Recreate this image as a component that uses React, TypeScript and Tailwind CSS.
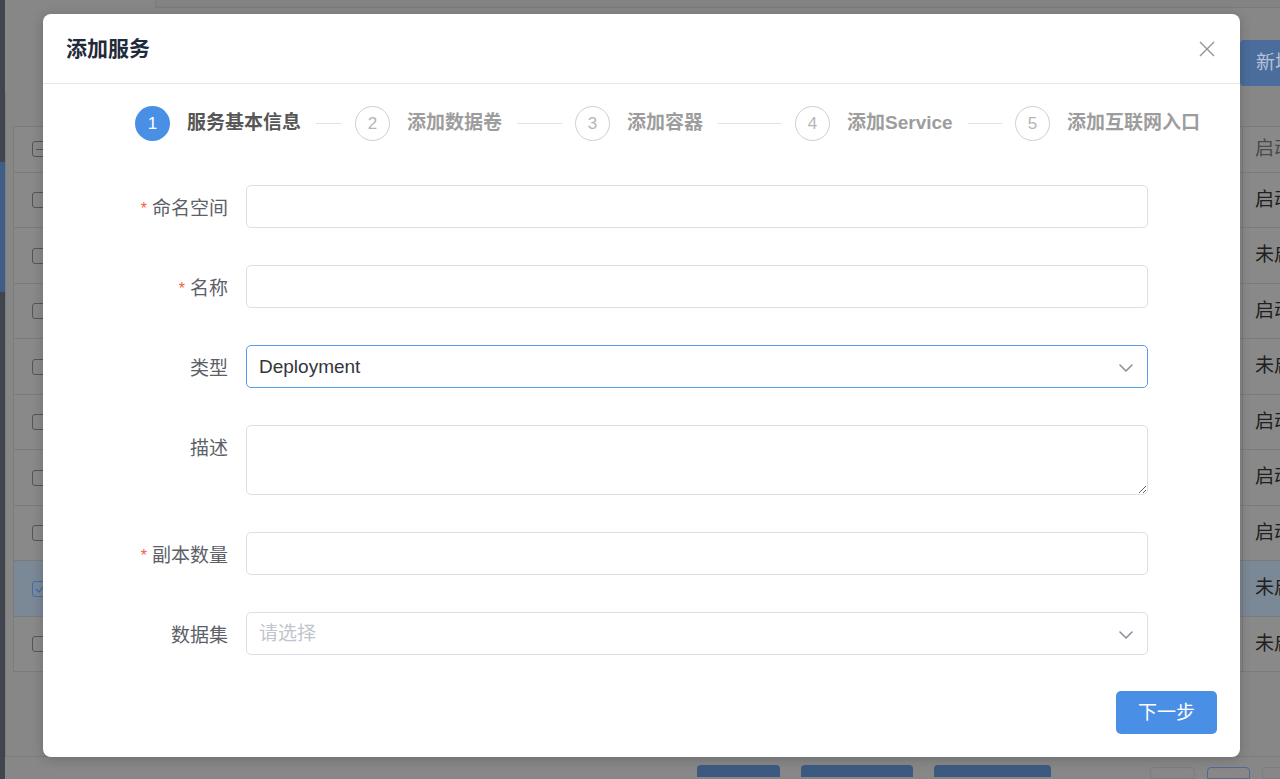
import type { ReactNode } from 'react';

const font = "font-['Liberation_Sans','Noto_Sans_CJK_SC',sans-serif]";

const steps = ['服务基本信息', '添加数据卷', '添加容器', '添加Service', '添加互联网入口'];

const rows = ['启动', '未启动', '启动', '未启动', '启动', '启动', '启动', '未启动', '未启动'];

function Chevron() {
  return (
    <svg width="14" height="8" viewBox="0 0 14 8" fill="none" className="shrink-0">
      <path d="M1 1l6 6 6-6" stroke="#8d9199" strokeWidth="1.6" strokeLinecap="round" strokeLinejoin="round" />
    </svg>
  );
}

function Field({ label, required, children, top }: { label: string; required?: boolean; children: ReactNode; top?: boolean }) {
  return (
    <div className={top ? 'flex items-start' : 'flex items-center'}>
      <label className="flex h-[43px] w-[203px] shrink-0 items-center justify-end pt-[5px] pr-[18px] text-[19px] text-[#5c6068]">
        {required ? <span className="mr-[5px] text-[16px] leading-none text-[#f0603c]">*</span> : null}
        {label}
      </label>
      {children}
    </div>
  );
}

function Box({ children, className = '' }: { children?: ReactNode; className?: string }) {
  return (
    <div className={`flex h-[43px] w-[902px] items-center rounded-[5px] border px-[12px] pt-[2px] text-[19px] ${className}`}>
      {children}
    </div>
  );
}

function Checkbox({ checked, half }: { checked?: boolean; half?: boolean }) {
  return (
    <span
      className={`flex h-[16px] w-[16px] items-center justify-center rounded-[3px] border ${
        checked ? 'border-[#3f6ea8]' : 'border-[#555]'
      }`}
    >
      {half ? <span className="h-px w-[8px] bg-[#555]" /> : null}
      {checked ? (
        <svg width="10" height="8" viewBox="0 0 10 8" fill="none">
          <path d="M1 4l3 3 5-6" stroke="#3f6ea8" strokeWidth="1.4" />
        </svg>
      ) : null}
    </span>
  );
}

export default function App() {
  return (
    <div className={`relative flex h-[779px] w-[1280px] overflow-hidden bg-[#878787] ${font}`}>
      {/* dimmed page behind the dialog */}
      <div className="flex h-full w-[5px] shrink-0 flex-col bg-[#41464e]">
        <div className="h-[162px]" />
        <div className="h-[130px] bg-[#3f5e87]" />
      </div>
      <div className="flex min-w-0 flex-1 flex-col">
        <div className="ml-[150px] h-[8px] border-b border-l border-[#7b7b7b] bg-[#838383]" />
        <div className="mt-[32px] flex h-[47px] justify-end">
          <div className="flex w-[40px] items-center rounded-l-[4px] bg-[#4a6d9c] pl-[16px] text-[19px] whitespace-nowrap text-[#b4c3d6]">
            新增
          </div>
        </div>
        <div className="mt-[8px] flex h-[674px] flex-col border-b border-l border-[#7b7b7b] pt-[32px] pl-[7px]">
          <div className="border-t border-l border-[#7b7b7b] bg-[#898989]">
            <div className="flex h-[45.7px] items-center border-b border-[#7b7b7b]">
              <div className="flex w-[1228px] shrink-0 pl-[18px]">
                <Checkbox half />
              </div>
              <div className="flex h-full flex-1 items-center border-l border-[#7b7b7b] pl-[12px] text-[19px] whitespace-nowrap text-[#4a4a4a]">
                启动状态
              </div>
            </div>
            {rows.map((r, i) => (
              <div
                key={i}
                className={`flex h-[55.5px] items-center border-b border-[#7b7b7b] ${i === 7 ? 'bg-[#7b8896]' : ''}`}
              >
                <div className="flex w-[1228px] shrink-0 pl-[18px]">
                  <Checkbox checked={i === 7} />
                </div>
                <div className="flex h-full flex-1 items-center border-l border-[#7b7b7b] pl-[12px] text-[19px] whitespace-nowrap text-[#202020]">
                  {r}
                </div>
              </div>
            ))}
          </div>
        </div>
        <div className="mt-[8px] flex items-start">
          <div className="ml-[692px] h-[12px] w-[83px] shrink-0 rounded-t-[4px] bg-[#3c5a80]" />
          <div className="ml-[21px] h-[12px] w-[112px] shrink-0 rounded-t-[4px] bg-[#3c5a80]" />
          <div className="ml-[21px] h-[12px] w-[117px] shrink-0 rounded-t-[4px] bg-[#3c5a80]" />
          <div className="mt-[2px] ml-[99px] h-[12px] w-[45px] shrink-0 rounded-t-[4px] border border-[#7d7d7d]" />
          <div className="mt-[2px] ml-[12px] h-[12px] w-[43px] shrink-0 rounded-t-[4px] border border-[#4d6c94]" />
          <div className="mt-[2px] ml-[12px] h-[12px] w-[30px] shrink-0 rounded-t-[4px] border border-[#7d7d7d]" />
        </div>
      </div>

      {/* dialog */}
      <div className="absolute top-[14px] left-[43px] flex h-[743px] w-[1197px] flex-col rounded-[8px] bg-white shadow-[0_2px_12px_rgba(0,0,0,0.2)]">
        <div className="flex h-[70px] shrink-0 items-center justify-between border-b border-[#e6e8eb] pr-[25px] pl-[23px]">
          <h2 className="text-[21px] leading-none font-semibold text-[#1f2a3a]">添加服务</h2>
          <svg width="16" height="16" viewBox="0 0 16 16" fill="none">
            <path d="M1 1l14 14M15 1L1 15" stroke="#909399" strokeWidth="1.4" />
          </svg>
        </div>

        <div className="mt-[22px] flex items-center pl-[92px]">
          {steps.map((s, i) => (
            <div key={s} className={i < 4 ? 'flex w-[220px] items-center' : 'flex items-center'}>
              <div
                className={`flex h-[35px] w-[35px] shrink-0 items-center justify-center rounded-full text-[17px] ${
                  i === 0 ? 'bg-[#4a8fe6] text-white' : 'border border-[#cfcfcf] text-[#b5b5b5]'
                }`}
              >
                {i + 1}
              </div>
              <span
                className={`ml-[17px] shrink-0 text-[19px] font-semibold whitespace-nowrap ${
                  i === 0 ? 'text-[#565656]' : 'text-[#9d9d9d]'
                }`}
              >
                {s}
              </span>
              {i < 4 ? <div className="mr-[13px] ml-[15px] h-px flex-1 bg-[#e2e2e2]" /> : null}
            </div>
          ))}
        </div>

        <div className="mt-[44px] flex flex-col gap-[37px]">
          <Field label="命名空间" required>
            <Box className="border-[#dcdfe6]" />
          </Field>
          <Field label="名称" required>
            <Box className="border-[#dcdfe6]" />
          </Field>
          <Field label="类型">
            <Box className="justify-between border-[#5a9be8] text-[#33363b]">
              <span>Deployment</span>
              <span className="mr-[2px]">
                <Chevron />
              </span>
            </Box>
          </Field>
          <Field label="描述" top>
            <textarea className="h-[70px] w-[902px] resize-y rounded-[5px] border border-[#dcdfe6] px-[12px] py-[6px] text-[19px] outline-none" />
          </Field>
          <Field label="副本数量" required>
            <Box className="border-[#dcdfe6]" />
          </Field>
          <Field label="数据集">
            <Box className="justify-between border-[#dcdfe6] text-[#c0c4cc]">
              <span>请选择</span>
              <span className="mr-[2px]">
                <Chevron />
              </span>
            </Box>
          </Field>
        </div>

        <div className="mt-[36px] flex justify-end pr-[23px]">
          <button className="h-[43px] w-[101px] rounded-[5px] bg-[#4a8fe6] pt-[2px] text-[19px] text-white">下一步</button>
        </div>
      </div>
    </div>
  );
}
